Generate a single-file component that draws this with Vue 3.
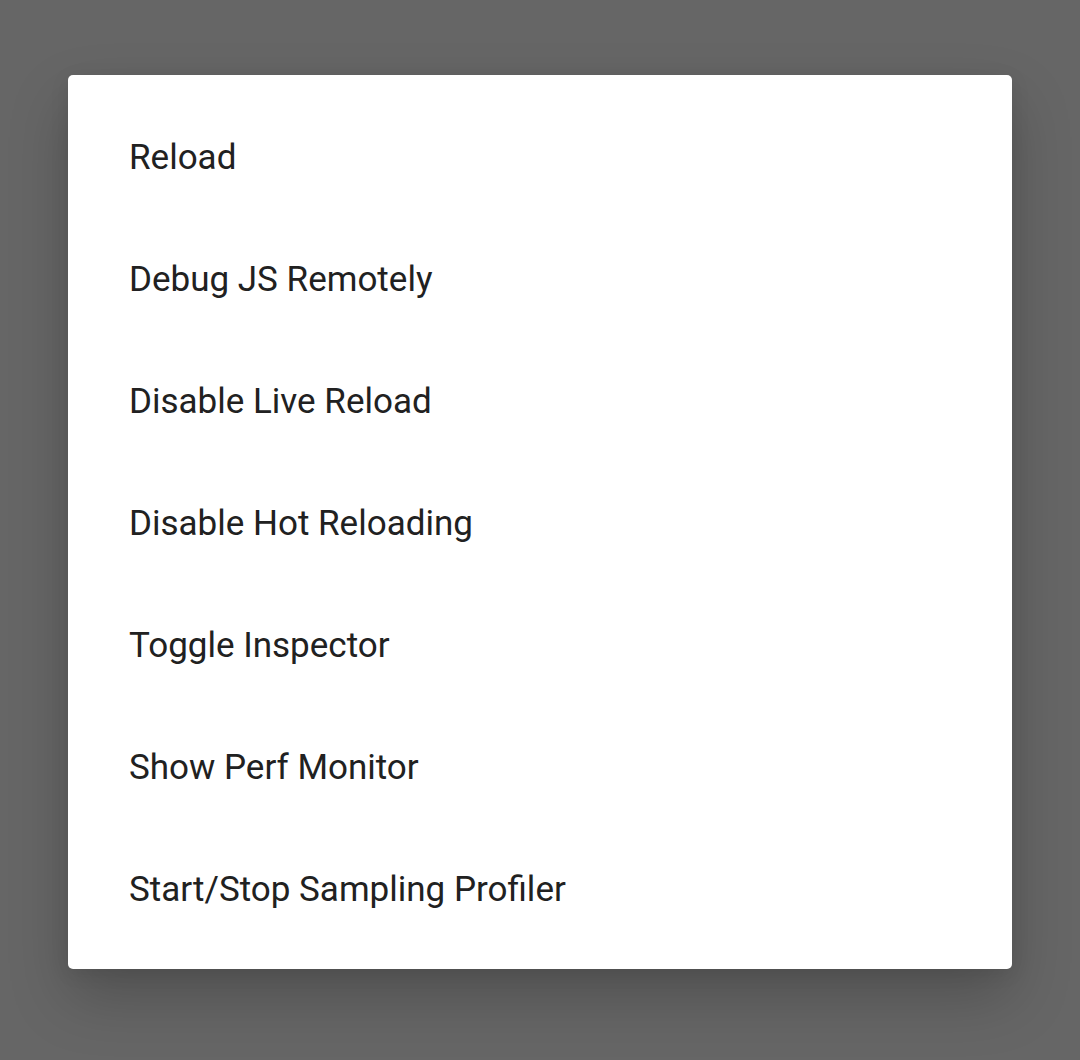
<script setup>
const items = [
  'Reload',
  'Debug JS Remotely',
  'Disable Live Reload',
  'Disable Hot Reloading',
  'Toggle Inspector',
  'Show Perf Monitor',
  'Start/Stop Sampling Profiler',
]
</script>

<template>
  <main class="backdrop">
    <div class="dialog" role="dialog" aria-label="Developer menu">
      <ul class="menu">
        <li v-for="item in items" :key="item">
          <button type="button" class="item">{{ item }}</button>
        </li>
      </ul>
    </div>
  </main>
</template>

<style>
body {
  margin: 0;
  background: #666666;
}
</style>

<style scoped>
.backdrop {
  box-sizing: border-box;
  min-height: 100vh;
  padding: 75px 68px 91px;
  background: #666666;
}

.dialog {
  padding: 22px 0 18px;
  border-radius: 5px;
  background: #ffffff;
  box-shadow: 0 28px 60px rgba(0, 0, 0, 0.21), 0 4px 20px rgba(0, 0, 0, 0.08);
}

.menu {
  margin: 0;
  padding: 0;
  list-style: none;
}

.item {
  display: block;
  width: 100%;
  height: 122px;
  padding: 0 61px;
  border: 0;
  background: transparent;
  color: #212121;
  font-family: Roboto, "Liberation Sans", sans-serif;
  font-size: 35px;
  line-height: 44px;
  text-align: left;
  cursor: pointer;
}
</style>
